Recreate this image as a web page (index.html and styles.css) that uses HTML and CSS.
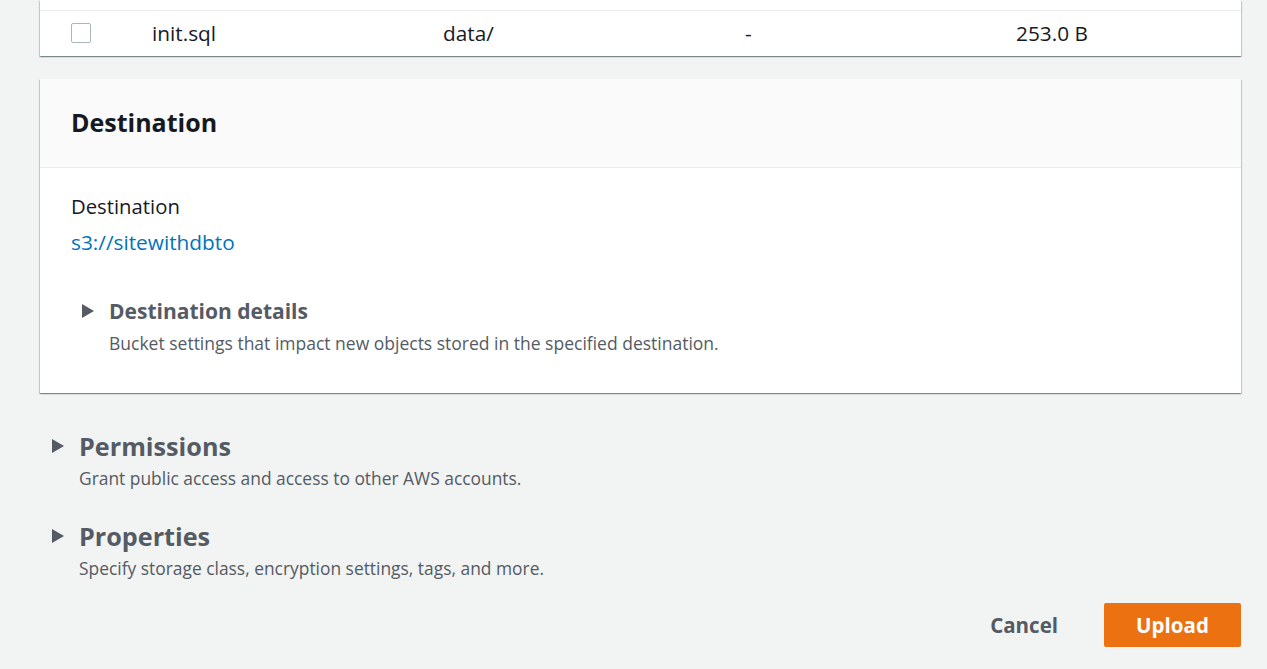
FILE: index.html
```html
<!DOCTYPE html>
<html>
<head>
<meta charset="utf-8">
<link rel="stylesheet" href="styles.css">
</head>
<body>
<div class="page">
  <div class="card table-card">
    <div class="row-stub"></div>
    <div class="row">
      <div class="cell c-check"><span class="checkbox"></span></div>
      <div class="cell c-name">init.sql</div>
      <div class="cell c-folder">data/</div>
      <div class="cell c-type">-</div>
      <div class="cell c-size">253.0 B</div>
    </div>
  </div>

  <div class="card dest-card">
    <div class="card-header"><h2 class="card-title">Destination</h2></div>
    <div class="card-body">
      <div class="field-label">Destination</div>
      <a class="link">s3://sitewithdbto</a>
      <div class="expander inner">
        <div class="exp-head"><span class="caret"></span><span class="exp-title">Destination details</span></div>
        <div class="exp-desc">Bucket settings that impact new objects stored in the specified destination.</div>
      </div>
    </div>
  </div>

  <div class="expander outer perms">
    <div class="exp-head"><span class="caret"></span><span class="exp-title">Permissions</span></div>
    <div class="exp-desc">Grant public access and access to other AWS accounts.</div>
  </div>
  <div class="expander outer props">
    <div class="exp-head"><span class="caret"></span><span class="exp-title">Properties</span></div>
    <div class="exp-desc">Specify storage class, encryption settings, tags, and more.</div>
  </div>

  <div class="actions">
    <button class="btn btn-link">Cancel</button>
    <button class="btn btn-primary">Upload</button>
  </div>
</div>
</body>
</html>
```

FILE: styles.css
```css
html, body {
  margin: 0;
  padding: 0;
  background: #f2f3f3;
  font-family: "Open Sans", "Noto Sans", sans-serif;
  color: #16191f;
}
.page {
  padding: 0 26px 0 40px;
}
.card {
  background: #fff;
  box-shadow: 0 1px 1px 0 rgba(0,28,36,.3), 1px 1px 1px 0 rgba(0,28,36,.15), -1px 1px 1px 0 rgba(0,28,36,.15);
}
.row-stub {
  height: 10px;
}
.row {
  display: flex;
  align-items: center;
  height: 46px;
  border-top: 1px solid #eaeded;
  font-size: 20.8px;
  padding-bottom: 1px;
  box-sizing: border-box;
}
.cell { white-space: nowrap; }
.c-check { width: 112px; padding-left: 31px; box-sizing: border-box; display: flex; align-items: center; }
.checkbox {
  width: 18px; height: 18px;
  border: 1px solid #aab7b8;
  border-radius: 2px;
  background: #fff;
}
.c-name { width: 291px; }
.c-folder { width: 302px; }
.c-type { width: 271px; }

.dest-card {
  margin-top: 23px;
}
.card-header {
  height: 89px;
  background: #fafafa;
  border-bottom: 1px solid #eaeded;
  display: flex;
  align-items: center;
  padding-left: 31px;
  padding-bottom: 3px;
  box-sizing: border-box;
}
.card-title {
  margin: 0;
  font-size: 25px;
  font-weight: 700;
  color: #16191f;
}
.card-body {
  padding: 24px 31px 38px;
}
.field-label {
  font-size: 20.3px;
  line-height: 28px;
}
.link {
  display: block;
  color: #0073bb;
  font-size: 20.8px;
  line-height: 28px;
  margin-top: 8px;
}
.expander .exp-head {
  display: flex;
  align-items: center;
  color: #545b64;
  font-weight: 700;
}
.caret {
  width: 0; height: 0;
  border-left: 12px solid #545b64;
  border-top: 7.5px solid transparent;
  border-bottom: 7.5px solid transparent;
}
.exp-desc {
  color: #545b64;
  font-size: 17.4px;
  line-height: 24px;
}
.expander.inner {
  margin-top: 40px;
  padding-left: 11px;
}
.expander.inner .exp-title {
  font-size: 21px;
  line-height: 30px;
  margin-left: 15px;
}
.expander.inner .exp-desc {
  margin-left: 27px;
  margin-top: 5px;
  font-size: 17.5px;
}
.expander.outer {
  padding-left: 12px;
}
.expander.outer .exp-title {
  font-size: 25.2px;
  line-height: 34px;
  margin-left: 15px;
}
.expander.outer .exp-desc {
  margin-left: 27px;
  margin-top: 3px;
}
.perms { margin-top: 36px; }
.props { margin-top: 29px; }
.props .exp-desc { margin-top: 4px; }

.actions {
  display: flex;
  justify-content: flex-end;
  align-items: center;
  gap: 24px;
  margin-top: 23px;
}
.btn {
  font-family: inherit;
  font-size: 20.5px;
  font-weight: 700;
  border: none;
  cursor: pointer;
}
.btn-link {
  background: transparent;
  color: #545b64;
  padding: 0 22px;
}
.btn-primary {
  background: #ec7211;
  color: #fff;
  width: 137px;
  height: 44px;
  border-radius: 2px;
}
```
